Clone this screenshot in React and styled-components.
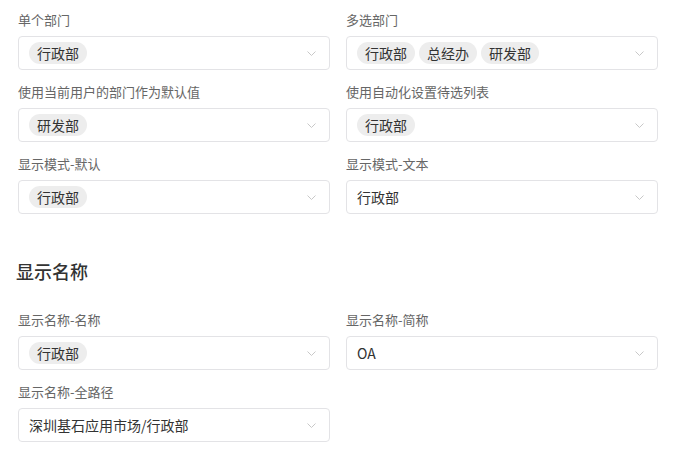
import styled, { createGlobalStyle } from "styled-components";

const GlobalStyle = createGlobalStyle`
  body {
    margin: 0;
    background: #fff;
    font-family: "Noto Sans CJK SC", "Noto Sans", sans-serif;
  }
`;

const Page = styled.div`
  width: 640px;
  padding: 10px 0 0 18px;
`;

const Grid = styled.div`
  display: grid;
  grid-template-columns: 312px 312px;
  column-gap: 16px;
  row-gap: 12px;
`;

const Field = styled.div`
  display: flex;
  flex-direction: column;
  gap: 6px;
`;

const Label = styled.div`
  font-size: 13px;
  line-height: 20px;
  color: #666;
`;

const SelectBox = styled.div`
  box-sizing: border-box;
  height: 34px;
  border: 1px solid #e3e3e6;
  border-radius: 4px;
  display: flex;
  align-items: center;
  padding: 0 13px 0 10px;
  background: #fff;
`;

const Values = styled.div`
  flex: 1;
  display: flex;
  gap: 4px;
  align-items: center;
  font-size: 14px;
  color: #333;
`;

const Tag = styled.span`
  height: 22px;
  line-height: 22px;
  padding: 0 8px;
  border-radius: 11px;
  background: #ededed;
  font-size: 14px;
  color: #333;
`;

const Heading = styled.h2`
  margin: 44px 0 26px -2px;
  font-size: 18px;
  line-height: 26px;
  font-weight: 500;
  color: #333;
`;

const Chevron = () => (
  <svg width="9" height="5" viewBox="0 0 9 5" fill="none">
    <path d="M0.5 0.5 L4.5 4.5 L8.5 0.5" stroke="#c8c8c8" strokeWidth="1" />
  </svg>
);

const Select = ({ label, tags, text }) => (
  <Field>
    <Label>{label}</Label>
    <SelectBox>
      <Values>
        {tags ? tags.map((t) => <Tag key={t}>{t}</Tag>) : <span>{text}</span>}
      </Values>
      <Chevron />
    </SelectBox>
  </Field>
);

const App = () => {
  return (
    <Page>
      <GlobalStyle />
      <Grid>
        <Select label="单个部门" tags={["行政部"]} />
        <Select label="多选部门" tags={["行政部", "总经办", "研发部"]} />
        <Select label="使用当前用户的部门作为默认值" tags={["研发部"]} />
        <Select label="使用自动化设置待选列表" tags={["行政部"]} />
        <Select label="显示模式-默认" tags={["行政部"]} />
        <Select label="显示模式-文本" text="行政部" />
      </Grid>
      <Heading>显示名称</Heading>
      <Grid>
        <Select label="显示名称-名称" tags={["行政部"]} />
        <Select label="显示名称-简称" text="OA" />
        <Select label="显示名称-全路径" text="深圳基石应用市场/行政部" />
      </Grid>
    </Page>
  );
};

export default App;
